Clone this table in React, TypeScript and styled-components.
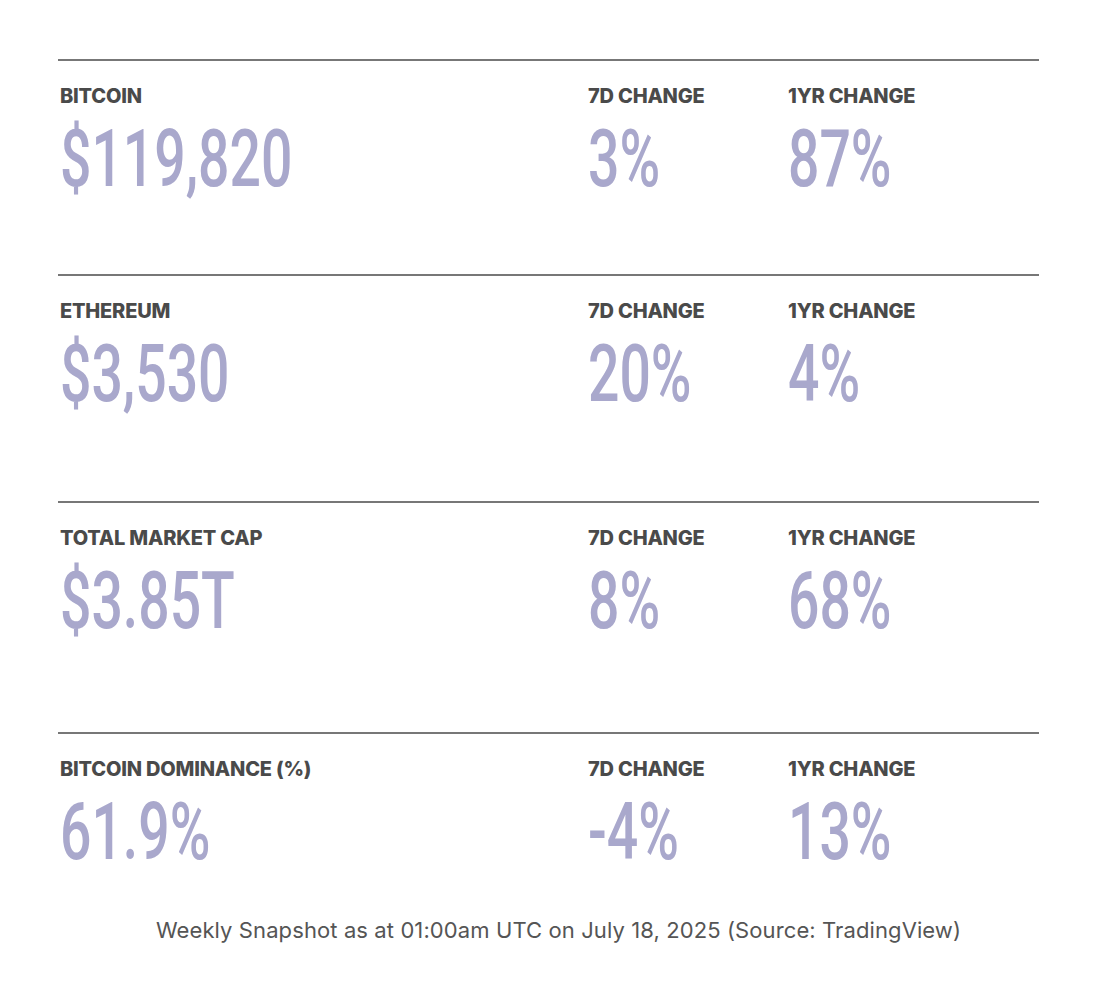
import React from "react";
import styled, { createGlobalStyle } from "styled-components";

const GlobalStyle = createGlobalStyle`
  html, body {
    margin: 0;
    padding: 0;
    background: #ffffff;
  }
  body {
    font-family: Inter, "Noto Sans", sans-serif;
  }
`;

type Row = {
  name: string;
  price: string;
  week: string;
  year: string;
  bottom: number;
};

const rows: Row[] = [
  { name: "BITCOIN", price: "$119,820", week: "3%", year: "87%", bottom: 75 },
  { name: "ETHEREUM", price: "$3,530", week: "20%", year: "4%", bottom: 87 },
  { name: "TOTAL MARKET CAP", price: "$3.85T", week: "8%", year: "68%", bottom: 91 },
  { name: "BITCOIN DOMINANCE (%)", price: "61.9%", week: "-4%", year: "13%", bottom: 45 },
];

export default function App() {
  return (
    <>
      <GlobalStyle />
      <Page>
        {rows.map((r) => (
          <Section key={r.name} $bottom={r.bottom}>
            <Stat>
              <Label>{r.name}</Label>
              <Value>
                <Narrow>{r.price}</Narrow>
              </Value>
            </Stat>
            <Stat>
              <Label>7D CHANGE</Label>
              <Value>
                <Narrow>{r.week}</Narrow>
              </Value>
            </Stat>
            <Stat>
              <Label>1YR CHANGE</Label>
              <Value>
                <Narrow>{r.year}</Narrow>
              </Value>
            </Stat>
          </Section>
        ))}
        <Footer>Weekly Snapshot as at 01:00am UTC on July 18, 2025 (Source: TradingView)</Footer>
      </Page>
    </>
  );
}

const Page = styled.div`
  width: 981px;
  margin-left: 58px;
  padding-top: 59px;
`;

const Section = styled.section<{ $bottom: number }>`
  display: grid;
  grid-template-columns: 528px 200px 1fr;
  border-top: 2px solid #777777;
  padding-top: 25px;
  padding-bottom: ${(p) => p.$bottom}px;
`;

const Stat = styled.div`
  display: flex;
  flex-direction: column;
  gap: 14px;
  padding-left: 2px;
`;

const Label = styled.div`
  font-family: Inter, "Noto Sans", sans-serif;
  font-weight: 800;
  font-size: 20px;
  line-height: 20px;
  letter-spacing: -0.2px;
  color: #4a4a4a;
  white-space: nowrap;
`;

const Value = styled.div`
  font-family: Roboto, "Liberation Sans", sans-serif;
  font-weight: 500;
  font-size: 79px;
  line-height: 79px;
  color: #a9a8cc;
  white-space: nowrap;
`;

const Narrow = styled.span`
  display: inline-block;
  transform: scaleX(0.7);
  transform-origin: left center;
`;

const Footer = styled.p`
  margin: 0;
  padding-left: 20px;
  text-align: center;
  font-family: Inter, "Noto Sans", sans-serif;
  font-size: 22px;
  line-height: 26px;
  letter-spacing: 0.1px;
  color: #555555;
`;
